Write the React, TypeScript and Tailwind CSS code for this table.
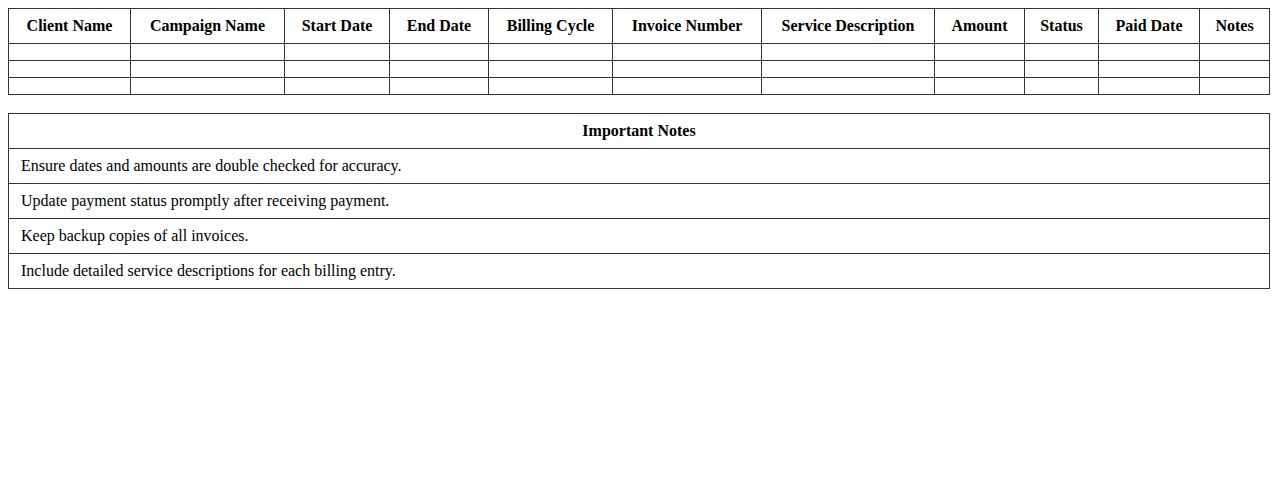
const COLUMNS = [
  ["Client Name", "w-[122px]"],
  ["Campaign Name", "w-[154px]"],
  ["Start Date", "w-[105px]"],
  ["End Date", "w-[99px]"],
  ["Billing Cycle", "w-[124px]"],
  ["Invoice Number", "w-[149px]"],
  ["Service Description", "w-[173px]"],
  ["Amount", "w-[90px]"],
  ["Status", "w-[74px]"],
  ["Paid Date", "w-[101px]"],
  ["Notes", "w-[70px]"],
];

const NOTES = [
  "Ensure dates and amounts are double checked for accuracy.",
  "Update payment status promptly after receiving payment.",
  "Keep backup copies of all invoices.",
  "Include detailed service descriptions for each billing entry.",
];

export default function App() {
  return (
    <div className="min-h-screen bg-white p-2 font-['Liberation_Serif',serif] text-base leading-[18px] text-black">
      <table className="w-full table-fixed border-collapse">
        <colgroup>
          {COLUMNS.map(([label, width]) => (
            <col key={label} className={width} />
          ))}
        </colgroup>
        <thead>
          <tr>
            {COLUMNS.map(([label]) => (
              <th key={label} className="border border-[#333] px-2 py-2 text-center font-bold">
                {label}
              </th>
            ))}
          </tr>
        </thead>
        <tbody>
          {[0, 1, 2].map((row) => (
            <tr key={row}>
              {COLUMNS.map(([label]) => (
                <td key={label} className="h-[17px] border border-[#333] p-0" />
              ))}
            </tr>
          ))}
        </tbody>
      </table>

      <table className="mt-[18px] w-full border-collapse">
        <thead>
          <tr>
            <th className="border border-[#333] px-3 py-2 text-center font-bold">Important Notes</th>
          </tr>
        </thead>
        <tbody>
          {NOTES.map((note) => (
            <tr key={note}>
              <td className="border border-[#333] px-3 py-2 text-left">{note}</td>
            </tr>
          ))}
        </tbody>
      </table>
    </div>
  );
}
